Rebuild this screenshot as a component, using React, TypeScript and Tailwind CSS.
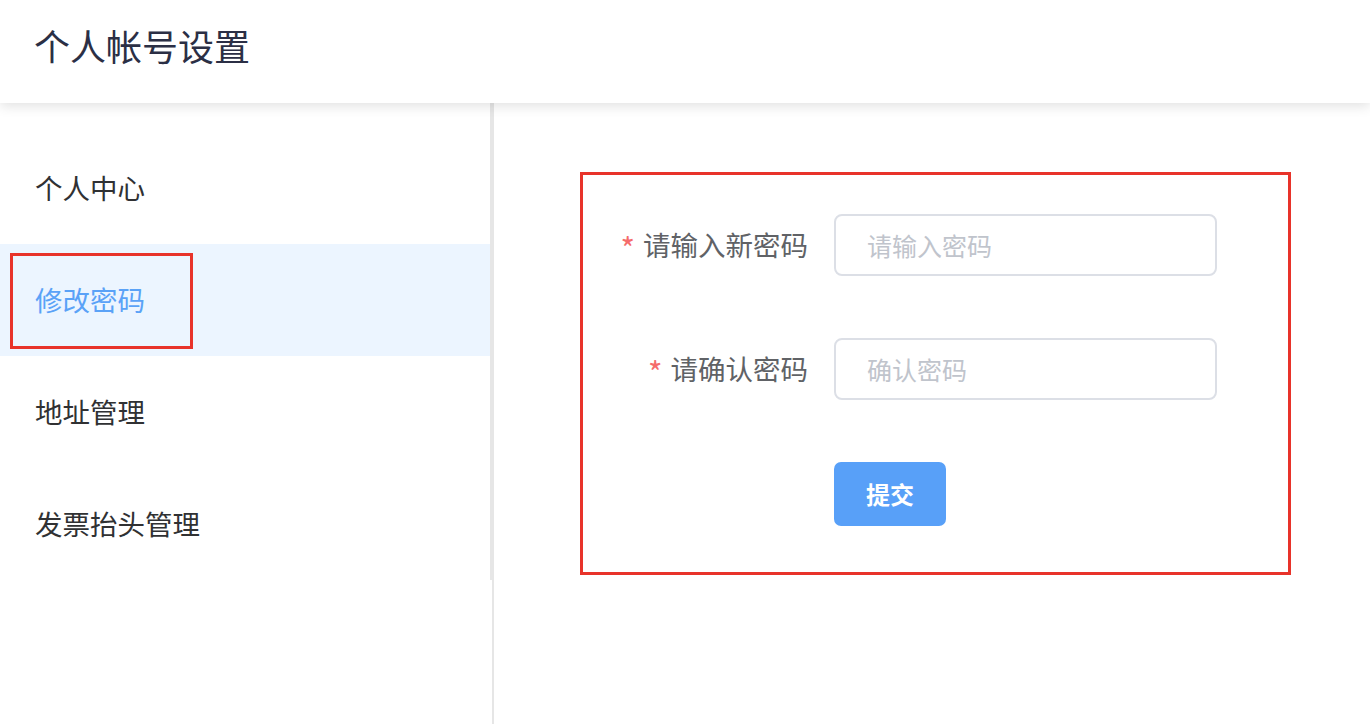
import React from "react";

const font = { fontFamily: '"Noto Sans CJK SC", "Noto Sans", sans-serif' };

export default function App() {
  const items = ["个人中心", "修改密码", "地址管理", "发票抬头管理"];
  return (
    <div className="w-[1370px] h-[724px] bg-white flex flex-col overflow-hidden" style={font}>
      <header className="h-[103px] shrink-0 flex items-center pl-[34px] bg-white relative z-10 shadow-[0_3px_12px_rgba(0,0,0,0.12)]">
        <h1 className="text-[36px] leading-none text-[#2b2f45] font-normal -mt-[14px]">个人帐号设置</h1>
      </header>
      <div className="flex flex-1 min-h-0">
        <aside className="w-[494px] shrink-0 border-r-2 border-[#e6e6e6]">
          <ul className="pt-[29px] border-r-2 border-[#e6e6e6]">
            {items.map((t, i) => (
              <li
                key={t}
                className={
                  "relative h-[112px] flex items-center pl-[35px] text-[27.5px] leading-none " +
                  (i === 1 ? "bg-[#ecf5ff] text-[#5aa2f7]" : "text-[#303133]")
                }
              >
                {t}
                {i === 1 && (
                  <span className="absolute left-[10px] top-[9px] w-[183px] h-[96px] border-[3px] border-[#e8332a]" />
                )}
              </li>
            ))}
          </ul>
        </aside>
        <main className="flex-1 pl-[86px] pt-[69px]">
          <div className="w-[711px] h-[403px] border-[3px] border-[#e8332a] pt-[39px]">
            <div className="flex flex-col gap-[62px]">
              <div className="flex items-center">
                <label className="w-[251px] pr-[26px] flex justify-end items-center text-[27.5px] leading-none text-[#606266]">
                  <span className="text-[#f56c6c] text-[31px] mr-[8px] mt-[4px]">*</span>请输入新密码
                </label>
                <div className="w-[383px] h-[62px] border-2 border-[#dcdfe6] rounded-[8px] flex items-center pl-[31px] text-[25px] text-[#c0c4cc] leading-none">
                  请输入密码
                </div>
              </div>
              <div className="flex items-center">
                <label className="w-[251px] pr-[26px] flex justify-end items-center text-[27.5px] leading-none text-[#606266]">
                  <span className="text-[#f56c6c] text-[31px] mr-[8px] mt-[4px]">*</span>请确认密码
                </label>
                <div className="w-[383px] h-[62px] border-2 border-[#dcdfe6] rounded-[8px] flex items-center pl-[31px] text-[25px] text-[#c0c4cc] leading-none">
                  确认密码
                </div>
              </div>
              <div className="flex">
                <div className="w-[251px]" />
                <button className="w-[112px] h-[64px] rounded-[7px] bg-[#58a0f8] text-white text-[24px] font-bold leading-none">
                  提交
                </button>
              </div>
            </div>
          </div>
        </main>
      </div>
    </div>
  );
}
